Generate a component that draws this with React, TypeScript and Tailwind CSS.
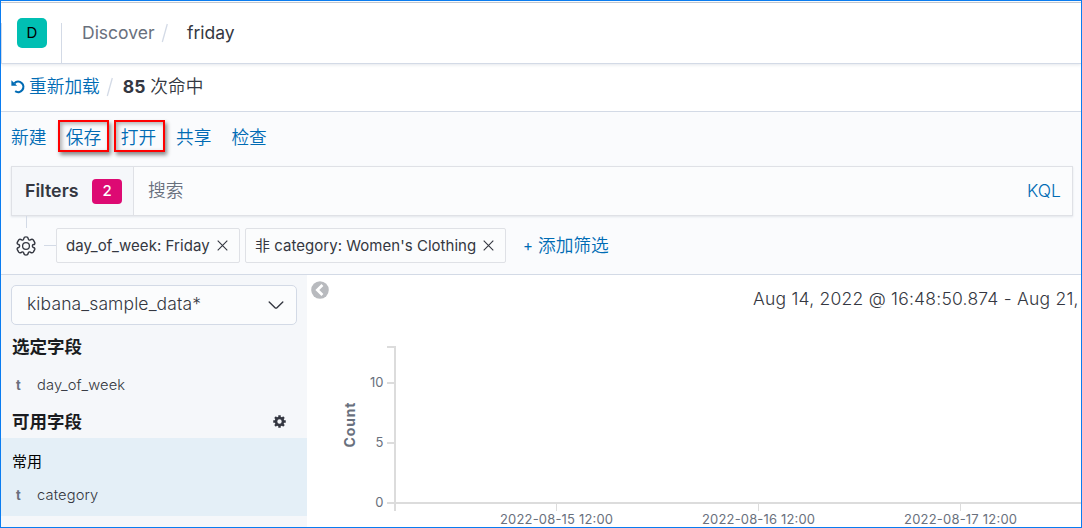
import React from 'react';

const Slash = ({ className }: { className: string }) => (
  <svg className={className} width="8" height="20" viewBox="0 0 8 20" fill="none" stroke="#d3dae6" strokeWidth="1.3">
    <path d="M6.3 1 1.3 19" />
  </svg>
);

const Cross = ({ className }: { className: string }) => (
  <svg className={className} width="11" height="11" viewBox="0 0 11 11" fill="none" stroke="#343741" strokeWidth="1.1">
    <path d="M.7.7l9.6 9.6M10.3.7.7 10.3" />
  </svg>
);

const GearOutline = () => (
  <svg className="h-[20px] w-[20px] shrink-0" viewBox="0 0 20 20" fill="none" stroke="#343741" strokeWidth="1.3" strokeLinejoin="round">
    <path
      transform="rotate(90 10 10) translate(10 10) scale(1.07 1.1) translate(-10 -10)"
      d="M8.600 3.300C9 2.300 7.800 1.600 6.600 2.100L4.300 3.400C3.200 4.300 3.700 5.300 4.300 6.100c.5.9-.1 1.900-1.200 1.900-1.200.1-1.600.8-1.600 2s.4 1.900 1.600 2c1.100 0 1.700 1 1.200 1.900-.6.8-1.100 1.800 0 2.700l2.300 1.300c1.200.5 1.800-.3 2-1.200.5-1.200 2.300-1.200 2.800 0 .2.900.8 1.700 2 1.200l2.300-1.300c1.100-.9.600-1.900 0-2.700-.5-.9.1-1.900 1.200-1.900 1.200-.1 1.600-.8 1.600-2s-.4-1.900-1.600-2c-1.100 0-1.700-1-1.200-1.900.6-.8 1.100-1.800 0-2.700l-2.300-1.300c-1.200-.5-1.800.3-2 1.200-.5 1.200-2.300 1.200-2.800 0z"
    />
    <circle cx="10" cy="10" r="3.400" />
  </svg>
);

const GearSolid = () => (
  <svg className="h-[13px] w-[13px] shrink-0" viewBox="0 0 16 16" fill="none" stroke="#343741">
    <circle cx="8" cy="8" r="4.300" strokeWidth="3.200" />
    <path d="M8 .3v3M8 12.700v3M.3 8h3M12.700 8h3M2.500 2.500l2.100 2.100M11.400 11.400l2.100 2.100M2.500 13.500l2.100-2.100M11.400 4.600l2.100-2.100" strokeWidth="3" />
  </svg>
);

const Reload = () => (
  <svg className="h-[15px] w-[15px] shrink-0" viewBox="0 0 15 15">
    <path d="M4.200 12.200A5.200 5.200 0 1 0 3.500 4.200" fill="none" stroke="#006bb4" strokeWidth="2.200" />
    <path d="M.4 1.200v5.600h5.800z" fill="#006bb4" />
  </svg>
);

const Field = ({ name }: { name: string }) => (
  <div className="flex h-[20px] items-center text-[14.7px] leading-[20px] font-light text-[#343741]">
    <span className="ml-[15px] w-[21px] text-[13px] font-bold text-[#69707d]">t</span>
    <span className="tracking-[0.12px]">{name}</span>
  </div>
);

const yTicks = [
  { y: 346, label: '' },
  { y: 382, label: '10' },
  { y: 442, label: '5' },
  { y: 502, label: '0' },
];
const xTicks = [
  { x: 556.5, label: '2022-08-15 12:00' },
  { x: 758.5, label: '2022-08-16 12:00' },
  { x: 960.5, label: '2022-08-17 12:00' },
];

const Chart = () => (
  <svg className="block" width="774" height="197" viewBox="307 330 774 197" fontSize="13" fill="#69707d">
    <g stroke="#dcdcdc" fill="none">
      <path d="M395 346V511M387 503H1081" strokeWidth="2" />
      {yTicks.map((t) => (
        <path key={t.y} d={`M387 ${t.y + 1}h9`} strokeWidth="2" />
      ))}
      {xTicks.map((t) => (
        <path key={t.x} d={`M${t.x} 503v8`} />
      ))}
    </g>
    {yTicks.map((t) => (
      <text key={t.y} x="383.500" y={t.y + 5} textAnchor="end">{t.label}</text>
    ))}
    {xTicks.map((t) => (
      <text key={t.x} x={t.x} y="524" textAnchor="middle" textLength="113">{t.label}</text>
    ))}
    <text transform="translate(355 425) rotate(-90)" textAnchor="middle" fontSize="14" fontWeight="700" textLength="45">Count</text>
  </svg>
);

export default function App() {
  return (
    <div className="flex h-[528px] w-[1082px] flex-col overflow-hidden border border-[#0a7cf0] bg-white font-['Inter','Noto_Sans_CJK_SC',sans-serif] text-[17.5px] leading-[26px] whitespace-nowrap text-[#343741]">
      <header className="mt-px flex h-[62px] shrink-0 border-t border-b border-t-[#c2c7d0] border-b-[#d3dae6] shadow-[0_1px_3px_rgba(152,162,179,0.25)]">
        <div className="mt-[20px] w-[61px] border-r border-l border-[#d3dae6]">
          <div className="-mt-[5px] ml-[15px] flex h-[30px] w-[30px] items-center justify-center rounded-[5px] bg-[#00bfb3] text-[15px] text-black">D</div>
        </div>
        <div className="mt-[17px] ml-[20px] flex h-[26px] items-center">
          <span className="w-[73px] text-[#69707d]">Discover</span>
          <Slash className="ml-[6px]" />
          <span className="ml-[18px]">friday</span>
        </div>
      </header>

      <div className="flex h-[48px] shrink-0 items-center border-b border-[#d3dae6] pb-[2px] pl-[10px]">
        <Reload />
        <span className="ml-[3px] text-[17.7px] font-[350] text-[#006bb4]">重新加载</span>
        <Slash className="ml-[6px]" />
        <span className="ml-[9px] font-bold">85</span>
        <span className="ml-[5px] text-[17.7px] font-[350]">次命中</span>
      </div>

      <section className="flex h-[163px] shrink-0 flex-col border-b border-[#d3dae6] bg-[#fafbfd]">
        <nav className="mt-[7px] flex h-[34px] items-center text-[17.7px] font-[350] text-[#006bb4]">
          <span className="ml-[10px] w-[47px] pt-[3px]">新建</span>
          <span className="flex h-[32px] w-[51px] items-center justify-center border-2 border-[#ff0000] shadow-[2px_3px_4px_rgba(0,0,0,0.45),inset_2px_2px_4px_rgba(0,0,0,0.3)]"><span className="pt-[3px]">保存</span></span>
          <span className="ml-[5px] flex h-[32px] w-[51px] items-center justify-center border-2 border-[#ff0000] shadow-[2px_3px_4px_rgba(0,0,0,0.45),inset_2px_2px_4px_rgba(0,0,0,0.3)]"><span className="pt-[3px] pr-[2px]">打开</span></span>
          <span className="ml-[11px] pt-[3px]">共享</span>
          <span className="ml-[20px] pt-[3px]">检查</span>
        </nav>
        <div className="mt-[13px] ml-[10px] flex h-[50px] w-[1062px] shrink-0 items-center border border-[#dfe1e6] bg-[#fbfcfd] shadow-[0_1px_2px_rgba(152,162,179,0.25)]">
          <div className="flex h-full w-[122px] items-center border-r border-[#dfe1e6] bg-[#f5f7fa] pl-[13px]">
            <span className="w-[67px] text-[17.8px] font-semibold">Filters</span>
            <span className="flex h-[25px] w-[30px] items-center justify-center rounded-[4px] bg-[#dd0a73] pb-px text-[15px] font-medium text-white">2</span>
          </div>
          <span className="ml-[14px] text-[17.7px] font-[350] text-[#69707d]">搜索</span>
          <span className="mr-[11px] ml-auto font-light text-[#006bb4]">KQL</span>
        </div>
        <div className="ml-[25px] h-[12px] w-px bg-[#d3dae6]" />
        <div className="flex h-[35px] shrink-0 items-center pl-[15px] text-[15px] leading-[22px]">
          <GearOutline />
          <div className="ml-[8px] h-px w-[12px] bg-[#d3dae6]" />
          <div className="flex h-[35px] w-[184px] items-center rounded-[2px] border border-[#dfe1e6] bg-[#fbfcfd] pl-[9px]">
            <span className="w-[143px] tracking-[0.05px]">day_of_week: Friday</span>
            <Cross className="ml-[8px]" />
          </div>
          <div className="ml-[5px] flex h-[35px] w-[261px] items-center rounded-[2px] border border-[#dfe1e6] bg-[#fbfcfd] pl-[9px]">
            <span className="w-[220px] tracking-[0.03px]">非 category: Women's Clothing</span>
            <Cross className="ml-[8px]" />
          </div>
          <span className="ml-[17px] text-[#006bb4]">+</span>
          <span className="ml-[5px] text-[17.7px] font-[350] text-[#006bb4]">添加筛选</span>
        </div>
      </section>

      <main className="flex min-h-0 flex-1">
        <aside className="w-[306px] shrink-0 bg-[#f5f7fa]">
          <div className="mt-[10px] ml-[10px] flex h-[40px] w-[286px] items-center justify-between rounded-[5px] border border-[#d3dae6] bg-[#fbfcfd] pr-[10px] pl-[15px] font-light">
            <span className="pb-[2px] tracking-[0.12px]">kibana_sample_data*</span>
            <svg width="20" height="20" viewBox="0 0 16 16" fill="#343741">
              <path d="M13.069 5.157L8.384 9.768a.546.546 0 01-.768 0L2.930 5.158a.552.552 0 00-.771 0 .53.53 0 000 .759l4.684 4.610c.641.631 1.672.63 2.312 0l4.684-4.610a.53.53 0 000-.76.552.552 0 00-.771 0z" />
            </svg>
          </div>
          <h3 className="mt-[9px] ml-[11px] h-[26px] font-bold text-[#1a1c21]">选定字段</h3>
          <div className="mt-[15px]"><Field name="day_of_week" /></div>
          <div className="mt-[14px] flex h-[26px] items-center pr-[21px] pl-[11px]">
            <h3 className="flex-1 font-bold text-[#1a1c21]">可用字段</h3>
            <div className="pb-[2px]"><GearSolid /></div>
          </div>
          <div className="mt-[3px] h-[78px] bg-[#e4eff7] pt-[13px]">
            <div className="ml-[11px] h-[21px] text-[15px] leading-[21px] text-black">常用</div>
            <div className="mt-[13px]"><Field name="category" /></div>
          </div>
        </aside>
        <div className="flex min-w-0 flex-1 flex-col overflow-hidden">
          <div className="flex h-[55px] shrink-0">
            <svg className="mt-[6px] ml-[4px]" width="18" height="18" viewBox="0 0 17 17">
              <circle cx="8.500" cy="8.500" r="8.300" fill="#b8babe" />
              <path d="M10.800 3.800 6 8.500l4.800 4.700" fill="none" stroke="#fff" strokeWidth="2.600" />
            </svg>
            <span className="mt-[11px] ml-[424px] font-light tracking-[0.23px]">Aug 14, 2022 @ 16:48:50.874 - Aug 21,</span>
          </div>
          <Chart />
        </div>
      </main>
    </div>
  );
}
